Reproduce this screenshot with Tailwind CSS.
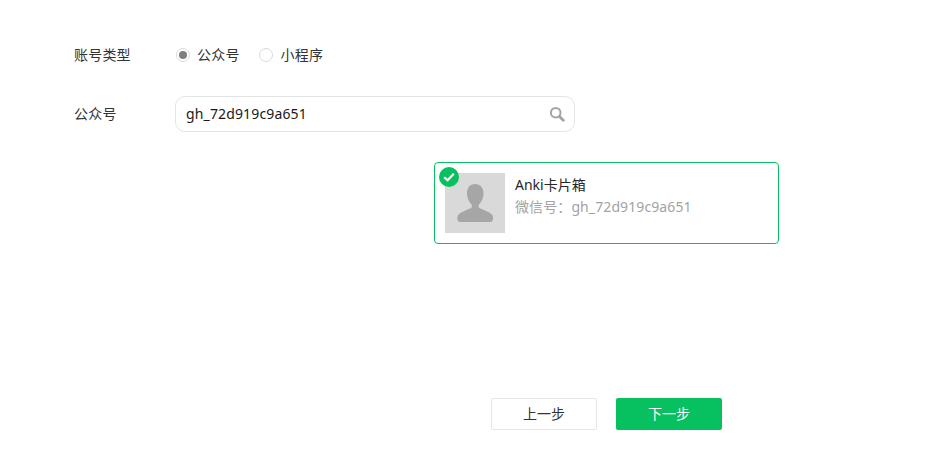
<!DOCTYPE html>
<html lang="zh-CN">
<head>
    <meta charset="UTF-8">
    <title>选择公众号</title>
    <script src="https://cdn.jsdelivr.net/npm/@tailwindcss/browser@4"></script>
</head>
<body class="bg-white text-[#333] text-sm font-['Noto_Sans','Noto_Sans_CJK_SC',sans-serif]">
<div class="w-[949px] h-[456px] overflow-hidden pl-[74px] pt-[45px]">

    <!-- account type -->
    <div class="flex items-center h-5">
        <label class="w-[102px] leading-5 tracking-[0.2px]">账号类型</label>
        <div class="flex items-center">
            <span class="w-3.5 h-3.5 rounded-full border border-[#d9d9d9] flex items-center justify-center">
                <span class="w-2 h-2 rounded-full bg-[#7f7f7f]"></span>
            </span>
            <span class="ml-[7px] leading-5 tracking-[0.2px]">公众号</span>
            <span class="ml-[19px] w-3.5 h-3.5 rounded-full border border-[#d9d9d9]"></span>
            <span class="ml-[8px] leading-5 tracking-[0.2px]">小程序</span>
        </div>
    </div>

    <!-- search -->
    <div class="flex items-center mt-[31px] h-9">
        <label class="w-[101px] leading-5 tracking-[0.2px]">公众号</label>
        <div class="w-[400px] h-9 rounded-[10px] border border-[#e4e4e4] flex items-center justify-between pl-[10px] pr-[9px]">
            <span class="text-[#1a1a1a] tracking-[0.14px]">gh_72d919c9a651</span>
            <svg class="w-4 h-4" viewBox="0 0 16 16" fill="none">
                <circle cx="6.7" cy="6.7" r="4.800" stroke="#a3a3a3" stroke-width="2"/>
                <path d="M10.400 10.400L14.300 14.300" stroke="#a3a3a3" stroke-width="2.800" stroke-linecap="round"/>
            </svg>
        </div>
    </div>

    <!-- result card -->
    <div class="relative ml-[360px] mt-[30px] w-[345px] h-[82px] rounded-[4px] border border-[#07c160] flex items-center pl-[10px]">
        <span class="absolute left-[4px] top-[4px] w-5 h-5 rounded-full bg-[#07c160] flex items-center justify-center">
            <svg class="w-3.5 h-3.5" viewBox="0 0 14 14" fill="none">
                <path d="M2.200 7.200L5.600 10.200L11.800 3.800" stroke="white" stroke-width="2.200"/>
            </svg>
        </span>
        <div class="w-[60px] h-[60px] bg-[#d9d9d9] flex items-center justify-center shrink-0">
            <svg class="w-[38px] h-[38px]" viewBox="0 0 38 38">
                <path fill="#a6a6a6" d="M19 0c5.300 0 8.500 4 8.500 9.500 0 4.500-2 8.500-4.500 11-.8 1-.6 3 .8 3.800 3 1.500 10.700 4 12.700 7 1 1.800 1 6.700-2 6.700H4c-3 0-3-4.900-2-6.700 2-3 9.700-5.500 12.700-7 1.400-.8 1.600-2.800.8-3.800-2.500-2.500-4.500-6.500-4.500-11C11 4 13.700 0 19 0z"/>
            </svg>
        </div>
        <div class="ml-[10px] pb-[14px]">
            <p class="leading-[22px] text-[#262626]">Anki卡片箱</p>
            <p class="leading-[22px] text-[#a3a3a3] tracking-[0.1px]">微信号：gh_72d919c9a651</p>
        </div>
    </div>

    <!-- actions -->
    <div class="flex ml-[417px] mt-[154px] gap-[19px]">
        <button class="w-[106px] h-8 rounded-[2px] border border-[#e6e6e6] bg-white text-[#333]">上一步</button>
        <button class="w-[106px] h-8 rounded-[2px] bg-[#07c160] text-white">下一步</button>
    </div>
</div>
</body>
</html>
